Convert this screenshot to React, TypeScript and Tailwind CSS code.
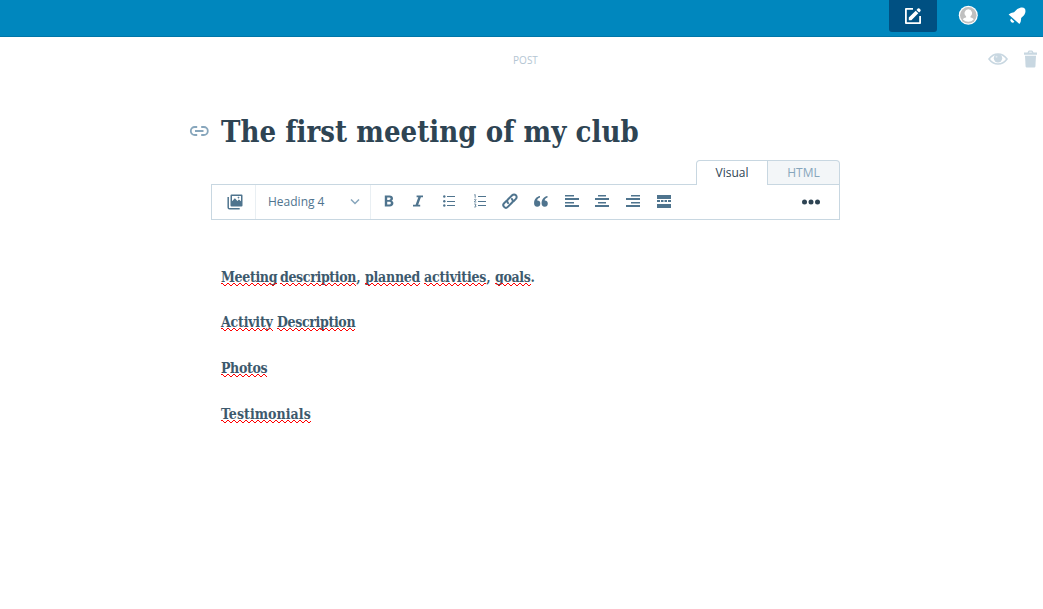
import React from "react";

type IconProps = { className?: string; children: React.ReactNode; box?: string };

function Icon({ className = "", children, box = "0 0 18 18" }: IconProps) {
  return (
    <svg viewBox={box} className={`block shrink-0 ${className}`} fill="currentColor" aria-hidden="true">
      {children}
    </svg>
  );
}

function Misspelled({ id, className = "", children }: { id: string; className?: string; children: string }) {
  return (
    <span className={`relative inline-block ${className}`}>
      {children}
      <svg className="absolute left-0 top-[16px] h-[3px] w-full" shapeRendering="crispEdges" aria-hidden="true">
        <defs>
          <pattern id={id} width="6" height="3" patternUnits="userSpaceOnUse">
            <path d="M0 0h2v1H0zM2 1h1v1H2zM3 2h2v1H3zM5 1h1v1H5z" fill="#f00" />
          </pattern>
        </defs>
        <rect width="100%" height="3" fill={`url(#${id})`} />
      </svg>
    </span>
  );
}

function Masterbar() {
  return (
    <header className="flex h-[37px] items-start justify-end border-b border-[#0076a8] bg-[#0087be] text-white">
      <button className="flex h-8 w-12 items-center justify-center rounded-b-[3px] bg-[#005082]">
        <Icon className="h-[18px] w-[18px]">
          <path d="M9 1.900H1.900v14.200h14.200V9" fill="none" stroke="currentColor" strokeWidth="1.800" strokeLinejoin="round" />
          <path d="M4.800 13.200v-2.600l6.900-6.900 2.600 2.600-6.900 6.900zM12.500 2.900l1.300-1.300q.8-.7 1.600 0l1 1q.7.8 0 1.600l-1.300 1.300z" />
        </Icon>
      </button>
      <button className="flex h-8 w-[62px] items-start justify-center pt-[5px]">
        <Icon className="h-5 w-5" box="0 0 20 20">
          <circle cx="10.300" cy="10.300" r="9.500" fill="#fff" />
          <circle cx="10.300" cy="10.300" r="8.300" fill="#c0c0c0" />
          <path d="M10.300 4.300a3.900 3.900 0 0 1 2.200 7v1.100c1.800.4 2.800 1 3.200 2.100a7.500 7.500 0 0 1-10.800 0c.4-1.100 1.400-1.700 3.200-2.100v-1.100a3.900 3.900 0 0 1 2.200-7z" fill="#fff" />
        </Icon>
      </button>
      <button className="flex h-8 w-11 items-center pl-[9px]">
        <Icon className="h-[18px] w-[18px]">
          <path d="M.6 7.600Q2.800 5.400 6 5.200L9.300 2C12 .2 15.400-.1 16.700 1.400c1.300 1.500.9 4.900-.9 7l-2.700 2.700q.3 3.200-1.700 5.900z" />
          <path d="M3 11.600 6.400 14.800A2.300 2.300 0 0 1 3 11.600z" />
        </Icon>
      </button>
    </header>
  );
}

function ActionBar() {
  return (
    <div className="grid h-[46px] grid-cols-[1fr_42px_1fr] items-center pl-2 text-[#c8d7e1]">
      <span className="col-start-2 text-center text-[10px] leading-4 text-[#b4c6d3]">POST</span>
      <div className="flex items-center justify-end gap-4 pb-0.5 pr-1.5">
        <Icon className="h-[14px] w-5" box="0 0 20 14">
          <path d="M1 7c2.600-3.600 5.500-5 9-5s6.400 1.400 9 5c-2.600 3.600-5.500 5-9 5S3.600 10.600 1 7z" fill="none" stroke="currentColor" strokeWidth="1.600" />
          <circle cx="10" cy="6.300" r="4.200" />
          <circle cx="8.500" cy="4.800" r="1" fill="#fff" fillOpacity=".5" />
        </Icon>
        <Icon className="h-[18px] w-[13px]" box="0 0 13 18">
          <path d="M1 5.800h11l-.6 10.700q-.1 1-1.100 1H2.700q-1 0-1.100-1z" />
          <path d="M0 2.500h3.500l.8-1.500q.2-.5.8-.5h2.800q.6 0 .8.5l.8 1.500H13v2.200H0zM5 2.500h3L7.600 1.700H5.400z" />
        </Icon>
      </div>
    </div>
  );
}

function Toolbar() {
  return (
    <div className="flex h-9 w-[629px] border border-[#c8d7e1] text-[#4f748e]">
      <button className="flex w-11 items-center justify-center border-r border-[#e9eff3] pl-[3px]">
        <Icon className="h-4 w-4" box="0 0 16 16">
          <path d="M4.500.500h10q1 0 1 1v10q0 1-1 1h-10q-1 0-1-1v-10q0-1 1-1zM5 7.200l2.900-3 2.500 2.700 1.500-1.500L14 7.200V2H5zM11.500 2.300l.4 1 1 .4-1 .4-.4 1-.4-1-1-.4 1-.4z" fillRule="evenodd" />
          <path d="M1.200 3v10.500q0 1.300 1.300 1.300h10.200" fill="none" stroke="currentColor" strokeWidth="1.500" />
        </Icon>
      </button>
      <button className="flex w-[115px] items-center justify-between border-r border-[#e9eff3] pl-3 pr-[10px] text-[12px]">
        <span>Heading 4</span>
        <Icon className="h-[6px] w-[10px]" box="0 0 10 6">
          <path d="M1 .5l4 4 4-4" fill="none" stroke="#87a6bc" strokeWidth="1.500" />
        </Icon>
      </button>
      <div className="flex items-center pb-0.5 pl-2.5">
        <button className="flex h-4 w-4 items-center justify-center">
          <Icon className="h-3 w-[10px]" box="0 0 10 12">
            <path d="M.8.500h4.700c2.200 0 3.500 1.100 3.500 2.900 0 1.300-.7 2-1.600 2.400 1.300.3 2 1.200 2 2.500 0 2-1.400 3.200-3.700 3.200H.8zM3.200 2.400v2.500h1.700q1.700 0 1.700-1.300T4.900 2.400zM3.200 6.700v2.900h1.900q1.800 0 1.800-1.500T5.100 6.700z" fillRule="evenodd" />
          </Icon>
        </button>
        <button className="ml-[13px] flex h-4 w-4 items-center justify-center">
          <Icon className="h-3 w-[10px]" box="0 0 10 12">
            <path d="M3.600.500H10v1.800H7.900L5.200 9.700h2v1.800H0V9.700h2.600l2.700-7.400H3.600z" />
          </Icon>
        </button>
        <button className="ml-[15px] flex h-4 w-4 items-center justify-center">
          <Icon className="h-3 w-3" box="0 0 12 12">
            <path d="M4 1h8v1H4zM4 6h8v1H4zM4 10h8v1H4z" />
            <circle cx="1.300" cy="1.500" r="1.200" /><circle cx="1.300" cy="6.300" r="1.200" /><circle cx="1.300" cy="10.500" r="1.200" />
          </Icon>
        </button>
        <button className="ml-[15px] flex h-4 w-4 items-center justify-center">
          <Icon className="h-[14px] w-3" box="0 0 12 14">
            <path d="M4 2h8v1H4zM4 7h8v1H4zM4 11h8v1H4z" />
            <path d="M.2 1l1-.5v3.300M.2 5.500q1.800-.8 1.800.2L.3 8h2M.2 10h1.500q.8.800-.7 1.300 1.700.4.700 1.700H.2" fill="none" stroke="currentColor" strokeWidth=".8" />
          </Icon>
        </button>
        <button className="ml-[13px] flex h-[18px] w-[18px] items-center justify-center">
          <Icon className="h-4 w-4" box="0 0 16 16">
            <g fill="none" stroke="currentColor" strokeWidth="2" strokeLinecap="round">
              <path d="M6.100 10.100c-1.100-1.100-1.100-2.700 0-3.800l4.100-4.100a2.500 2.500 0 0 1 3.700 3.700l-2.300 2.300" />
              <path d="M9.900 6c1.100 1.100 1.100 2.700 0 3.800l-4.100 4.100a2.500 2.500 0 0 1-3.700-3.700l2.300-2.300" />
            </g>
          </Icon>
        </button>
        <button className="ml-[14px] flex h-4 w-4 items-center justify-center">
          <Icon className="h-[11px] w-[14px]" box="0 0 14 11">
            <path d="M6 0v1.500C4.200 2 3.200 3 3.200 4.500h.2A3.100 3.100 0 1 1 .1 7.600C-.1 3.800 2 .7 6 0z" />
            <path d="M13.500 0v1.500c-1.800.5-2.800 1.500-2.800 3h.2a3.100 3.100 0 1 1-3.300 3.100C7.400 3.800 9.500.7 13.500 0z" />
          </Icon>
        </button>
        <button className="ml-[15px] flex h-4 w-4 items-center justify-center">
          <Icon className="h-3 w-[14px]" box="0 0 14 12">
            <path d="M0 0h9v1.500H0zM0 3h14v2H0zM0 7h9v1.500H0zM0 10h14v2H0z" />
          </Icon>
        </button>
        <button className="ml-[14px] flex h-4 w-4 items-center justify-center">
          <Icon className="h-3 w-[14px]" box="0 0 14 12">
            <path d="M3 0h8v1.500H3zM0 3h14v2H0zM3 7h8v1.500H3zM0 10h14v2H0z" />
          </Icon>
        </button>
        <button className="ml-[15px] flex h-4 w-4 items-center justify-center">
          <Icon className="h-3 w-[14px]" box="0 0 14 12">
            <path d="M5 0h9v1.500H5zM0 3h14v2H0zM5 7h9v1.500H5zM0 10h14v2H0z" />
          </Icon>
        </button>
        <button className="ml-[15px] flex h-4 w-4 items-center justify-center">
          <Icon className="h-[14px] w-[14px]" box="0 0 14 14">
            <path d="M0 1h14v4H0zM0 6h3v2H0zM4 6h2.500v2H4zM7.500 6H10v2H7.500zM11 6h3v2h-3zM0 10h14v4H0z" />
          </Icon>
        </button>
      </div>
      <button className="ml-auto flex items-center pr-[18px] text-[#2e4453]">
        <Icon className="h-[6px] w-5" box="0 0 20 6">
          <circle cx="3.500" cy="3" r="2.500" /><circle cx="10" cy="3" r="2.500" /><circle cx="16.500" cy="3" r="2.500" />
        </Icon>
      </button>
    </div>
  );
}

export default function App() {
  return (
    <div className="h-[609px] w-[1043px] overflow-hidden bg-white font-['Open_Sans',sans-serif]">
      <Masterbar />
      <ActionBar />
      <main className="ml-[189px] w-[651px]">
        <div className="flex h-[77px] items-center pt-[20px]">
          <Icon className="mb-0.5 h-3 w-5 text-[#87a6bc]" box="0 0 20 12">
            <path d="M8.200 2H5.800a4 4 0 0 0 0 8h2.400M12.200 2h2.600a4 4 0 0 1 0 8h-2.600M6 6h8.500" fill="none" stroke="currentColor" strokeWidth="1.800" />
          </Icon>
          <h1 className="ml-3 whitespace-nowrap font-['DejaVu_Serif_Condensed','DejaVu_Serif',serif] text-[29px] font-bold leading-10 tracking-[0.05px] text-[#2e4453] [font-stretch:condensed]">The first meeting of my club</h1>
        </div>
        <div className="ml-[22px]">
          <div className="relative z-10 -mb-px flex h-[25px] justify-end text-[12px]">
            <button className="w-[72px] rounded-tl-[4px] border border-b-0 border-[#c8d7e1] bg-white text-[#2e4453]">Visual</button>
            <button className="w-[72px] rounded-tr-[4px] border border-l-0 border-[#c8d7e1] bg-[#f3f6f8] text-[#87a6bc]">HTML</button>
          </div>
          <Toolbar />
          <article className="ml-2.5 mt-[47px] flex flex-col gap-[26px] whitespace-nowrap font-['DejaVu_Serif_Condensed','DejaVu_Serif',serif] text-[14px] font-bold leading-5 tracking-[-0.35px] text-[#3d596d] [font-stretch:condensed]">
            <h4 className="flex">
              <span className="w-[59px]"><Misspelled id="w1">Meeting</Misspelled></span>
              <span className="w-[85px]"><Misspelled id="w2">description</Misspelled>,</span>
              <span className="w-[59px]"><Misspelled id="w3" className="tracking-[-0.25px]">planned</Misspelled></span>
              <span className="w-[71px]"><Misspelled id="w4" className="tracking-[-0.2px]">activities</Misspelled>,</span>
              <span><Misspelled id="w5">goals</Misspelled>.</span>
            </h4>
            <h4 className="-mt-px flex">
              <span className="w-[56px]"><Misspelled id="w6" className="tracking-[-0.2px]">Activity</Misspelled></span>
              <Misspelled id="w7">Description</Misspelled>
            </h4>
            <h4><Misspelled id="w8">Photos</Misspelled></h4>
            <h4><Misspelled id="w9" className="tracking-[0.05px]">Testimonials</Misspelled></h4>
          </article>
        </div>
      </main>
    </div>
  );
}
